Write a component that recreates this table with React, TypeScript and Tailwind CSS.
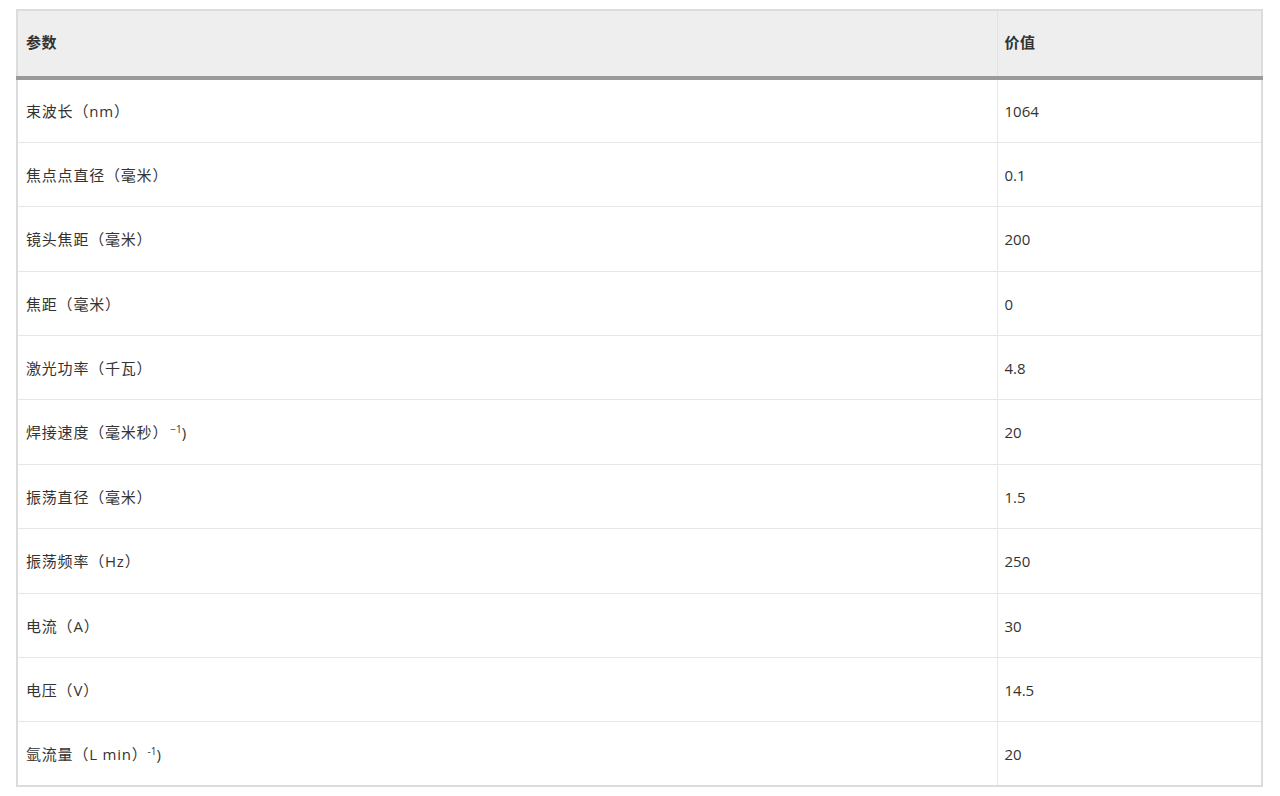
import React from "react";

const rows: { k: React.ReactNode; v: string }[] = [
  { k: "束波长（nm）", v: "1064" },
  { k: "焦点点直径（毫米）", v: "0.1" },
  { k: "镜头焦距（毫米）", v: "200" },
  { k: "焦距（毫米）", v: "0" },
  { k: "激光功率（千瓦）", v: "4.8" },
  {
    k: (
      <>
        焊接速度（毫米秒）<sup className="text-[10px] ml-[2px] tracking-normal">−1</sup>)
      </>
    ),
    v: "20",
  },
  { k: "振荡直径（毫米）", v: "1.5" },
  { k: "振荡频率（Hz）", v: "250" },
  { k: "电流（A）", v: "30" },
  { k: "电压（V）", v: "14.5" },
  {
    k: (
      <>
        氩流量（L min）<sup className="text-[10px] tracking-normal">-1</sup>)
      </>
    ),
    v: "20",
  },
];

export default function App() {
  return (
    <div
      className="w-[1280px] h-[796px] bg-white pt-[9px] pl-[16px] text-[15px] text-[#333]"
      style={{ fontFamily: '"Open Sans", "Noto Sans CJK SC", sans-serif' }}
    >
      <table className="w-[1247px] border-collapse border-2 border-[#dcdcdc]">
        <thead>
          <tr className="h-[68px] bg-[#eeeeee] border-b-[4px] border-[#9a9a9a]">
            <th className="w-[980px] text-left font-bold pl-[8px] pb-[2px] tracking-[0.5px] border-r border-[#e2e2e2]">参数</th>
            <th className="text-left font-bold pl-[7px] pb-[2px] tracking-[0.5px]">价值</th>
          </tr>
        </thead>
        <tbody>
          {rows.map((r, i) => (
            <tr key={i} className="h-[64.4px] border-t border-[#e6e6e6]">
              <td className="pl-[8px] pt-[1px] tracking-[0.8px] border-r border-[#e6e6e6]">{r.k}</td>
              <td className="pl-[7px] pt-[1px]">{r.v}</td>
            </tr>
          ))}
        </tbody>
      </table>
    </div>
  );
}
